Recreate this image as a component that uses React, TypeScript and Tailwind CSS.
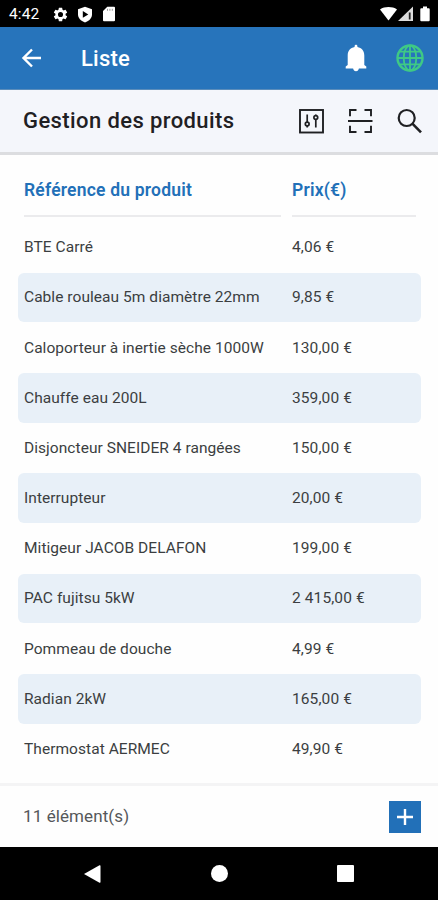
interface Product {
  name: string;
  price: string;
}

const PRODUCTS: Product[] = [
  { name: 'BTE Carré', price: '4,06 €' },
  { name: 'Cable rouleau 5m diamètre 22mm', price: '9,85 €' },
  { name: 'Caloporteur à inertie sèche 1000W', price: '130,00 €' },
  { name: 'Chauffe eau 200L', price: '359,00 €' },
  { name: 'Disjoncteur SNEIDER 4 rangées', price: '150,00 €' },
  { name: 'Interrupteur', price: '20,00 €' },
  { name: 'Mitigeur JACOB DELAFON', price: '199,00 €' },
  { name: 'PAC fujitsu 5kW', price: '2 415,00 €' },
  { name: 'Pommeau de douche', price: '4,99 €' },
  { name: 'Radian 2kW', price: '165,00 €' },
  { name: 'Thermostat AERMEC', price: '49,90 €' },
];

/** Android status bar: clock and system icons. */
function StatusBar() {
  return (
    <div className="flex h-[27px] items-center bg-black pl-[9px] pr-[8px] pt-px text-white">
      <span className="w-[43px] pt-[2px] text-[15.5px] leading-none tracking-[0.1px]">4:42</span>
      <svg className="h-[17px] w-[17px]" viewBox="0 0 24 24" fill="currentColor">
        <path d="M19.14 12.94c.04-.3.06-.61.06-.94s-.02-.64-.07-.94l2.03-1.58a.49.49 0 0 0 .12-.61l-1.92-3.32a.49.49 0 0 0-.59-.22l-2.39.96c-.5-.38-1.03-.7-1.62-.94l-.36-2.54a.48.48 0 0 0-.48-.41h-3.84a.47.47 0 0 0-.47.41l-.36 2.54c-.59.24-1.13.57-1.62.94l-2.39-.96a.48.48 0 0 0-.59.22L2.74 8.87a.48.48 0 0 0 .12.61l2.03 1.58c-.05.3-.09.63-.09.94s.02.64.07.94l-2.03 1.58a.49.49 0 0 0-.12.61l1.92 3.32c.12.22.37.29.59.22l2.39-.96c.5.38 1.03.7 1.62.94l.36 2.54c.05.24.24.41.48.41h3.84c.24 0 .44-.17.47-.41l.36-2.54c.59-.24 1.13-.56 1.62-.94l2.39.96c.22.08.47 0 .59-.22l1.92-3.32a.47.47 0 0 0-.12-.61zM12 15.6A3.6 3.6 0 1 1 12 8.4a3.6 3.6 0 0 1 0 7.2z" />
      </svg>
      <svg className="ml-[8px] h-[17px] w-[16px]" viewBox="0 0 16 17">
        <path d="M8 .8 15 3.3v5c0 3.9-2.7 6.5-7 8.3C3.7 14.8 1 12.200 1 8.300v-5z" fill="currentColor" />
        <path d="M5.8 5v6.800L11.300 8.400z" fill="#000" />
      </svg>
      <svg className="ml-[10px] h-[16px] w-[12px]" viewBox="0 0 12 16">
        <path d="M4.300.8H11a1 1 0 0 1 1 1v12.400a1 1 0 0 1-1 1H1a1 1 0 0 1-1-1V5z" fill="currentColor" />
        <path d="M4.500 2.800v2M6.900 2.800v2M9.300 2.800v2" stroke="#999" strokeWidth="1" />
      </svg>
      <svg className="ml-auto h-[16px] w-[17px]" viewBox="0 0 17 16" fill="currentColor">
        <path d="M0 3.500C4.700.3 12.300.3 17 3.500L8.500 14.400z" />
      </svg>
      <svg className="ml-px h-[16px] w-[16px]" viewBox="0 0 16 16">
        <path d="M0 15 15 .600V15z" fill="#ddd" />
        <path d="M10.800 6.500h1.800v7h-1.800z" fill="#222" />
      </svg>
      <svg className="ml-[6px] h-[16px] w-[10px]" viewBox="0 0 10 16" fill="currentColor">
        <path d="M3 .5h4v1.700h1.700a1 1 0 0 1 1 1V14.300a1 1 0 0 1-1 1H1.300a1 1 0 0 1-1-1V3.200a1 1 0 0 1 1-1H3z" />
      </svg>
    </div>
  );
}

function AppBar() {
  return (
    <header className="flex h-[63px] items-center border-b border-[#5b8dbb] bg-[#2774bb] pl-[21px] pr-[14px] text-white">
      <svg className="h-[20px] w-[20px]" viewBox="0 0 20 20" fill="none" stroke="currentColor" strokeWidth="2.4">
        <path d="M20 10H2.500M11 1.500 2.500 10l8.500 8.500" />
      </svg>
      <h1 className="ml-[40px] text-[22px] font-medium tracking-[0.2px]">Liste</h1>
      <svg className="ml-auto h-[28px] w-[22px]" viewBox="0 0 22 28" fill="currentColor">
        <path d="M11 .8c.8 0 1.400.6 1.400 1.400v.9c4.300.8 6.900 4 6.900 8.300v9.600l2 1.600v2H13.900c-.3 1.600-1.300 2.600-2.900 2.600s-2.600-1-2.900-2.600H.7v-2l2-1.600v-9.600c0-4.300 2.600-7.500 6.900-8.300v-.9C9.600 1.400 10.200.8 11 .8z" />
      </svg>
      <svg className="ml-[29px] h-[28px] w-[28px]" viewBox="0 0 28 28" fill="none" stroke="#3fc985" strokeWidth="1.800">
        <circle cx="14" cy="14" r="12.500" strokeWidth="2.400" />
        <ellipse cx="14" cy="14" rx="6.300" ry="12.500" />
        <path d="M14 1.500v25M1.500 14h25M3.500 7.600h21M3.500 20.400h21" />
      </svg>
    </header>
  );
}

function Toolbar() {
  return (
    <div className="flex h-[65px] items-center border-b-[3px] border-[#dcdde0] bg-[#f4f6fb] pl-[23px] pr-[16px] text-[#1f2023]">
      <h2 className="whitespace-nowrap pb-[2px] text-[22px] font-medium tracking-[0.4px]">Gestion des produits</h2>
      <svg className="ml-auto h-[26px] w-[26px]" viewBox="0 0 26 26" fill="none" stroke="currentColor" strokeWidth="1.700">
        <rect x="2" y="2" width="23" height="22.500" strokeWidth="1.900" />
        <path d="M9.200 6.500v8M9.200 18v1.500M17.800 11.500v8M17.800 6.500v1.500" />
        <circle cx="9.200" cy="16" r="1.900" />
        <circle cx="17.800" cy="9.500" r="1.900" />
      </svg>
      <svg className="ml-[23px] h-[26px] w-[26px]" viewBox="0 0 26 26" fill="none" stroke="currentColor" strokeWidth="1.900">
        <path d="M3 8.300V2h6.500M17.500 2H24v6.300M24 17.700V24h-6.500M9.500 24H3v-6.300M1 13h24.500" />
      </svg>
      <svg className="ml-[24px] h-[26px] w-[25px]" viewBox="0 0 25 26" fill="none" stroke="currentColor" strokeWidth="2.200">
        <circle cx="9.700" cy="10" r="8" />
        <path d="m15.400 15.700 8.600 8.600" strokeWidth="2.600" />
      </svg>
    </div>
  );
}

function ProductTable() {
  return (
    <main className="h-[628px] px-[18px] pt-[7px]">
      <div className="grid grid-cols-[257px_124px] gap-x-[11px] px-[6px] text-[17.5px] font-semibold tracking-[0.2px] text-[#2270b8]">
        <div className="h-[55px] border-b-2 border-[#ebebed] pt-[15px]">Référence du produit</div>
        <div className="h-[55px] border-b-2 border-[#ebebed] pt-[15px]">Prix(€)</div>
      </div>
      <div className="pt-[5.500px]">
        {PRODUCTS.map((product, i) => (
          <div key={product.name} className="h-[50.2px] pb-[0.7px]">
            <div
              className={`grid h-full w-[403px] grid-cols-[257px_1fr] items-center gap-x-[11px] rounded-md px-[6px] pt-px text-[15.5px] text-[#3b3e41] ${
                i % 2 === 1 ? 'bg-[#e8f0f8]' : ''
              }`}
            >
              <span className="whitespace-nowrap tracking-[0.05px]">{product.name}</span>
              <span className="whitespace-nowrap tracking-[0.1px]">{product.price}</span>
            </div>
          </div>
        ))}
      </div>
    </main>
  );
}

function Footer() {
  return (
    <footer className="flex h-[64px] items-center justify-between border-t-[3px] border-[#f4f4f5] pl-[23px] pr-[17px]">
      <span className="text-[17px] tracking-[0.1px] text-[#55575a]">11 élément(s)</span>
      <button type="button" aria-label="Ajouter" className="flex h-8 w-8 items-center justify-center bg-[#2270b8]">
        <svg className="h-4 w-4" viewBox="0 0 16 16" stroke="#fff" strokeWidth="2.400">
          <path d="M8 0v16M0 8h16" />
        </svg>
      </button>
    </footer>
  );
}

function NavigationBar() {
  return (
    <nav className="flex h-[53px] items-center bg-black pl-[84px]">
      <svg className="h-[18px] w-[17px]" viewBox="0 0 17 18" fill="#fff">
        <path d="M0 9 15.500.3c.6-.3 1 0 1 .6v16.200c0 .6-.4.900-1 .6z" />
      </svg>
      <span className="ml-[110px] h-[17px] w-[17px] rounded-full bg-white" />
      <span className="ml-[109px] h-[17px] w-[17px] rounded-[1px] bg-white" />
    </nav>
  );
}

export default function App() {
  return (
    <div className="flex h-[900px] w-[438px] flex-col overflow-hidden bg-[#fefefe] font-[Roboto,'Liberation_Sans',sans-serif]">
      <StatusBar />
      <AppBar />
      <Toolbar />
      <ProductTable />
      <Footer />
      <NavigationBar />
    </div>
  );
}
